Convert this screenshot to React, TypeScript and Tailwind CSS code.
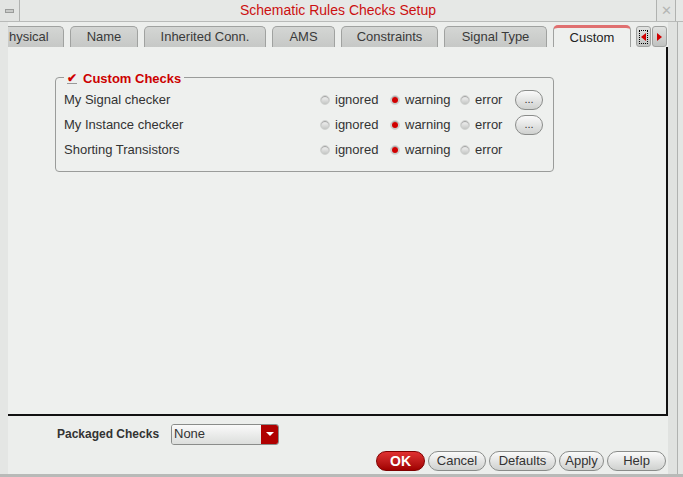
import React from "react";

const tabs = [
  { label: "hysical", w: "w-[56px]", first: true },
  { label: "Name", w: "w-[68px]" },
  { label: "Inherited Conn.", w: "w-[122px]" },
  { label: "AMS", w: "w-[63px]" },
  { label: "Constraints", w: "w-[97px]" },
  { label: "Signal Type", w: "w-[103px]" },
];

const rows = [
  { label: "My Signal checker", more: true },
  { label: "My Instance checker", more: true },
  { label: "Shorting Transistors", more: false },
];

function Radio({ on, label }: { on?: boolean; label: string }) {
  return (
    <div className="flex items-center gap-[5px]">
      <span className="w-[10px] h-[10px] rounded-full bg-gradient-to-b from-[#f8f8f8] to-[#c4c6c4] border border-[#d0d2d0] flex items-center justify-center shadow-[inset_0_1px_1px_#999]">
        {on && <span className="w-[6px] h-[6px] rounded-full bg-[#d00000]" />}
      </span>
      <span>{label}</span>
    </div>
  );
}

function PillButton({ children, red, className = "" }: { children: React.ReactNode; red?: boolean; className?: string }) {
  return (
    <div
      className={
        "h-[20px] rounded-full flex items-center justify-center border " +
        (red
          ? "bg-gradient-to-b from-[#e03030] to-[#a00000] border-[#800000] text-white font-bold "
          : "bg-gradient-to-b from-[#fafafa] to-[#cfd1cf] border-[#8a8c8a] text-[#333] ") +
        className
      }
    >
      {children}
    </div>
  );
}

export default function App() {
  return (
    <div
      className="w-[683px] h-[477px] bg-[#eceeec] flex flex-col text-[13px] text-[#333] overflow-hidden"
      style={{ fontFamily: '"Liberation Sans", Arial, sans-serif' }}
    >
      {/* title bar */}
      <div className="h-[22px] flex items-stretch bg-[#e6e8e6] border-b border-[#b8bab8]">
        <div className="w-[20px] border-r border-[#b0b2b0] flex items-center justify-center bg-[#e2e4e2]">
          <span className="w-[9px] h-[4px] bg-[#c8cac8] border border-[#9a9c9a]" />
        </div>
        <div className="flex-1 flex items-center justify-center text-[#cc1010] text-[14px]">
          Schematic Rules Checks Setup
        </div>
        <div className="w-[20px] mr-[7px] border-l border-r border-[#b0b2b0] flex items-center justify-center text-[#b4b6b4] text-[13px] bg-[#e2e4e2]">
          ✕
        </div>
      </div>

      <div className="flex flex-1">
        <div className="w-[8px] bg-[#e4e6e4]" />
        <div className="w-[660px] flex flex-col">
          {/* tabs */}
          <div className="h-[23px] mt-[2px] flex items-end gap-[6px]">
            {tabs.map((t) => (
              <div
                key={t.label}
                className={
                  t.w +
                  " h-[21px] bg-gradient-to-b from-[#d4d6d4] to-[#c6c8c6] border border-[#a0a2a0] border-b-0 flex items-center justify-center text-[13px] text-[#3a3a3a] " +
                  (t.first ? "rounded-tr-[5px] border-l-0 justify-start pl-[1px]" : "rounded-t-[5px]")
                }
              >
                {t.label}
              </div>
            ))}
            <div className="w-[78px] h-[22px] bg-[#eef0ee] border border-[#a0a2a0] border-b-0 border-t-[3px] border-t-[#e07070] rounded-t-[5px] flex items-center justify-center text-[13px] text-[#222]">
              Custom
            </div>
            <div className="flex gap-[1px] items-end ml-[-1px]">
              <div className="w-[15px] h-[21px] rounded-[3px] bg-gradient-to-b from-[#e0e2e0] to-[#c0c2c0] border border-[#a0a2a0] flex items-center justify-center">
                <span className="w-[9px] h-[14px] border border-dotted border-black flex items-center justify-center">
                  <span className="w-0 h-0 border-y-[4px] border-y-transparent border-r-[5px] border-r-[#d00000]" />
                </span>
              </div>
              <div className="w-[15px] h-[21px] rounded-[3px] bg-gradient-to-b from-[#e0e2e0] to-[#c0c2c0] border border-[#a0a2a0] flex items-center justify-center">
                <span className="w-0 h-0 border-y-[4px] border-y-transparent border-l-[5px] border-l-[#d00000]" />
              </div>
            </div>
          </div>

          {/* tab panel */}
          <div className="h-[369px] bg-[#eef0ee] border-r-2 border-b-2 border-[#111] pt-[30px] pl-[47px]">
            <div className="relative w-[499px] h-[95px] border border-[#9a9c9a] rounded-[4px] pt-[9px] pl-[8px]">
              <div className="absolute top-[-9px] left-[8px] px-[3px] bg-[#eef0ee] flex items-center gap-[6px]">
                <span className="w-[10px] h-[10px] border-b border-[#999] flex items-end justify-center text-[#d00000] text-[12px] leading-[10px] font-bold">
                  ✔
                </span>
                <span className="text-[#cc0000] font-bold text-[13px]">Custom Checks</span>
              </div>
              {rows.map((r) => (
                <div key={r.label} className="h-[25px] flex items-center">
                  <div className="w-[256px]">{r.label}</div>
                  <div className="w-[70px]">
                    <Radio label="ignored" />
                  </div>
                  <div className="w-[70px]">
                    <Radio on label="warning" />
                  </div>
                  <div className="w-[55px]">
                    <Radio label="error" />
                  </div>
                  {r.more && (
                    <PillButton className="w-[28px] h-[18px] text-[11px] leading-none">...</PillButton>
                  )}
                </div>
              ))}
            </div>
          </div>

          {/* bottom */}
          <div className="h-[30px] flex items-center mt-[3px] pl-[49px]">
            <span className="font-bold text-[12px] w-[114px]">Packaged Checks</span>
            <div className="w-[108px] h-[21px] flex border border-[#8a8c8a] rounded-[3px] overflow-hidden">
              <div className="flex-1 bg-gradient-to-b from-[#fafafa] to-[#dcdedc] flex items-center pl-[2px] text-[#333]">
                None
              </div>
              <div className="w-[17px] bg-[#b00000] flex items-center justify-center">
                <span className="w-0 h-0 border-x-[4px] border-x-transparent border-t-[4px] border-t-white" />
              </div>
            </div>
          </div>
          <div className="flex justify-end gap-[3px] pr-[2px] mt-[2px]">
            <PillButton red className="w-[49px] text-[14px]">OK</PillButton>
            <PillButton className="w-[58px]">Cancel</PillButton>
            <PillButton className="w-[67px]">Defaults</PillButton>
            <PillButton className="w-[45px]">Apply</PillButton>
            <PillButton className="w-[59px]">Help</PillButton>
          </div>
        </div>
        <div className="flex-1 flex">
          <div className="w-[9px] bg-[#e0e2e0]" />
          <div className="w-[1px] bg-[#b0b2b0]" />
          <div className="flex-1 bg-[#e4e6e4]" />
        </div>
      </div>
      <div className="h-[3px] bg-[#b8bab8]" />
    </div>
  );
}
